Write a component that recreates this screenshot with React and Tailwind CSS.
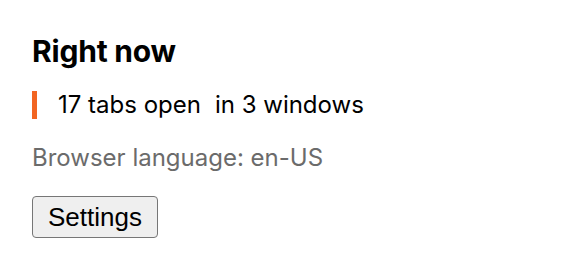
export default function App() {
  return (
    <div className="w-[584px] h-[270px] bg-white text-black px-8 pt-[33px]" style={{ fontFamily: "Inter, 'Noto Sans', sans-serif" }}>
      <h1 className="text-[30px] font-bold leading-[36px] tracking-[-0.2px]">Right now</h1>

      <div className="mt-[22px] flex items-center h-[28px]">
        <div className="w-[5px] h-[28px] bg-[#f26522]" />
        <span className="ml-[21px] text-[24px] leading-[28px]">17 tabs open</span>
        <span className="ml-[14px] text-[24px] leading-[28px]">in 3 windows</span>
      </div>

      <p className="mt-[23px] text-[24px] leading-[32px] text-[#6b6b6b]">Browser language: en-US</p>

      <button
        className="mt-[22px] h-[42px] w-[126px] border border-[#767676] rounded-[4px] bg-[#efefef] text-[26px] text-black"
        style={{ fontFamily: "'Liberation Sans', Arial, sans-serif" }}
      >
        Settings
      </button>
    </div>
  );
}
